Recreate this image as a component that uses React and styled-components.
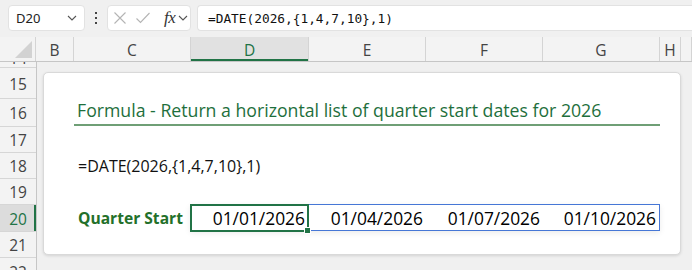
import React from "react";
import styled, { createGlobalStyle } from "styled-components";

const GlobalStyle = createGlobalStyle`
  body {
    margin: 0;
    background: #f0f0f0;
    font-family: "Open Sans", "Noto Sans", sans-serif;
    overflow: hidden;
  }
`;

const GREEN = "#217346";

const Page = styled.div`
  width: 692px;
  height: 270px;
  overflow: hidden;
  display: flex;
  flex-direction: column;
  background: #f0f0f0;
`;

/* ---------- formula bar ---------- */
const FormulaBar = styled.div`
  height: 37px;
  flex: none;
  display: flex;
  align-items: flex-start;
  padding: 5px 0 0 8px;
  box-sizing: border-box;
  background: #f0f0f0;
`;

const Box = styled.div`
  height: 26px;
  box-sizing: border-box;
  background: #fff;
  border: 1px solid #e2e2e2;
  border-radius: 4px;
  display: flex;
  align-items: center;
  width: ${(p) => p.$w || "auto"};
  flex: ${(p) => (p.$grow ? 1 : "none")};
  ${(p) => p.$grow && "border-right: none; border-radius: 4px 0 0 4px;"}
`;

const NameText = styled.span`
  font-family: "Noto Sans", sans-serif;
  font-size: 13px;
  color: #222;
  padding-left: 7px;
  flex: 1;
`;

const Dots = styled.div`
  width: 22px;
  height: 26px;
  display: flex;
  flex-direction: column;
  align-items: center;
  justify-content: center;
  gap: 3px;
  span {
    width: 2px;
    height: 2px;
    background: #444;
  }
`;

const FxIcons = styled.div`
  display: flex;
  align-items: center;
  padding-left: 5px;
  svg {
    display: block;
  }
`;

const Fx = styled.span`
  font-family: "Liberation Serif", serif;
  font-style: italic;
  font-size: 17px;
  color: #333;
  margin-left: 13px;
  letter-spacing: -0.5px;
`;

const FormulaText = styled.span`
  font-family: "DejaVu Sans Mono", monospace;
  font-size: 12.8px;
  color: #111;
  padding-left: 10px;
`;

const Gap = styled.div`
  width: ${(p) => p.$w}px;
  flex: none;
`;

const Chevron = ({ x = 0 }) => (
  <svg width="10" height="6" viewBox="0 0 10 6" style={{ marginLeft: x }}>
    <path d="M1 1 L5 5 L9 1" fill="none" stroke="#555" strokeWidth="1.1" />
  </svg>
);

/* ---------- sheet ---------- */
const Sheet = styled.div`
  flex: 1;
  min-height: 0;
  display: flex;
  flex-direction: column;
`;

const HeaderRow = styled.div`
  height: 24px;
  flex: none;
  display: grid;
  grid-template-columns: 36px 38px 117px 118px 117px 117px 117px 21px 1fr;
  border-bottom: 1px solid #c6c6c6;
  box-sizing: content-box;
  background: #f3f3f3;
`;

const Corner = styled.div`
  position: relative;
  border-right: 1px solid #d4d4d4;
  background: #f3f3f3;
  &::after {
    content: "";
    position: absolute;
    right: 3px;
    bottom: 3px;
    width: 0;
    height: 0;
    border-left: 17px solid transparent;
    border-bottom: 17px solid #d2d2d2;
  }
`;

const ColHead = styled.div`
  display: flex;
  align-items: center;
  justify-content: center;
  font-size: 15.5px;
  padding-top: 1px;
  color: ${(p) => (p.$active ? GREEN : "#444")};
  background: ${(p) => (p.$active ? "#e1e1e1" : "#f3f3f3")};
  border-right: 1px solid #d4d4d4;
  box-shadow: ${(p) => (p.$active ? `inset 0 -2px 0 ${GREEN}` : "none")};
`;

const Body = styled.div`
  flex: 1;
  min-height: 0;
  overflow: hidden;
  display: flex;
`;

const RowHeads = styled.div`
  width: 36px;
  flex: none;
  display: flex;
  flex-direction: column;
  border-right: 1px solid #c6c6c6;
  background: #f3f3f3;
`;

const RowHead = styled.div`
  height: ${(p) => p.$h}px;
  flex: none;
  box-sizing: border-box;
  overflow: hidden;
  display: flex;
  align-items: ${(p) => p.$align || "center"};
  justify-content: center;
  font-size: 15.5px;
  line-height: 17px;
  color: ${(p) => (p.$active ? GREEN : "#444")};
  background: ${(p) => (p.$active ? "#dcdcdc" : "#f3f3f3")};
  border-bottom: 1px solid #d6d6d6;
  box-shadow: ${(p) => (p.$active ? `inset -2px 0 0 ${GREEN}` : "none")};
  padding-top: ${(p) => (p.$pt === undefined ? 2 : p.$pt)}px;
`;

const Canvas = styled.div`
  flex: 1;
  padding: 10px 0 0 6px;
`;

const Card = styled.div`
  width: 638px;
  height: 183px;
  box-sizing: border-box;
  background: #fff;
  border: 1px solid #d9d9d9;
  border-radius: 5px;
  box-shadow: 0 1px 3px rgba(0, 0, 0, 0.12);
  display: grid;
  grid-template-columns: 30px 117px 118px 117px 117px 117px 1fr;
  grid-template-rows: 25px 28px 26px 26px 26px 27px 1fr;
`;

const Title = styled.div`
  grid-column: 2 / 7;
  grid-row: 2;
  display: flex;
  align-items: flex-end;
  padding: 0 0 2px 3px;
  border-bottom: 2px solid #6f9f76;
  font-size: 17.7px;
  color: #1e6f3c;
  white-space: nowrap;
`;

const Formula = styled.div`
  grid-column: 2 / 5;
  grid-row: 4;
  display: flex;
  align-items: center;
  padding: 1px 0 0 4px;
  font-size: 16px;
  color: #111;
  white-space: nowrap;
`;

const Label = styled.div`
  grid-column: 2;
  grid-row: 6;
  display: flex;
  align-items: center;
  padding: 1px 0 0 4px;
  font-size: 15.6px;
  font-weight: 700;
  color: #23702a;
  white-space: nowrap;
`;

const Spill = styled.div`
  grid-column: 3 / 7;
  grid-row: 6;
  margin-left: -1px;
  display: grid;
  grid-template-columns: 118px 117px 117px 1fr;
  border: 1px solid #4677d6;
  box-shadow: 0 2px 6px rgba(0, 0, 0, 0.08);
`;

const DateCell = styled.div`
  position: relative;
  display: flex;
  align-items: center;
  justify-content: flex-end;
  padding-right: 3px;
  font-size: 17.4px;
  color: #000;
  ${(p) =>
    p.$active &&
    `
    margin: -1px 0 -1px -1px;
    border: 2px solid ${GREEN};
    padding-right: 2px;
    &::after {
      content: "";
      position: absolute;
      right: -4px;
      bottom: -4px;
      width: 5px;
      height: 5px;
      background: ${GREEN};
      border: 1px solid #fff;
    }
  `}
`;

const cols = ["B", "C", "D", "E", "F", "G", "H"];
const rows = [
  { n: 14, h: 6, align: "flex-end", pt: 0 },
  { n: 15, h: 31 },
  { n: 16, h: 28 },
  { n: 17, h: 26 },
  { n: 18, h: 26 },
  { n: 19, h: 26 },
  { n: 20, h: 27, active: true },
  { n: 21, h: 26 },
  { n: 22, h: 20, align: "flex-start", pt: 6 },
];
const dates = ["01/01/2026", "01/04/2026", "01/07/2026", "01/10/2026"];

export default function App() {
  return (
    <Page>
      <GlobalStyle />
      <FormulaBar>
        <Box $w="77px">
          <NameText>D20</NameText>
          <Chevron />
          <Gap $w={7} />
        </Box>
        <Dots>
          <span />
          <span />
          <span />
        </Dots>
        <Box $w="84px">
          <FxIcons>
            <svg width="14" height="14" viewBox="0 0 14 14">
              <path d="M1.5 1.5 L12.5 12.5 M12.5 1.5 L1.5 12.5" stroke="#b4b4b4" strokeWidth="1.1" fill="none" />
            </svg>
            <svg width="16" height="14" viewBox="0 0 16 14" style={{ marginLeft: 8 }}>
              <path d="M1.5 7.5 L5.5 11.5 L14.5 2" stroke="#b4b4b4" strokeWidth="1.1" fill="none" />
            </svg>
            <Fx>fx</Fx>
            <Chevron x={3} />
          </FxIcons>
        </Box>
        <Gap $w={6} />
        <Box $grow>
          <FormulaText>=DATE(2026,&#123;1,4,7,10&#125;,1)</FormulaText>
        </Box>
      </FormulaBar>
      <Sheet>
        <HeaderRow>
          <Corner />
          {cols.map((c) => (
            <ColHead key={c} $active={c === "D"}>
              {c}
            </ColHead>
          ))}
          <ColHead />
        </HeaderRow>
        <Body>
          <RowHeads>
            {rows.map((r) => (
              <RowHead key={r.n} $h={r.h} $align={r.align} $pt={r.pt} $active={r.active}>
                {r.n}
              </RowHead>
            ))}
          </RowHeads>
          <Canvas>
            <Card>
              <Title>Formula - Return a horizontal list of quarter start dates for 2026</Title>
              <Formula>=DATE(2026,&#123;1,4,7,10&#125;,1)</Formula>
              <Label>Quarter Start</Label>
              <Spill>
                {dates.map((d, i) => (
                  <DateCell key={d} $active={i === 0}>
                    {d}
                  </DateCell>
                ))}
              </Spill>
            </Card>
          </Canvas>
        </Body>
      </Sheet>
    </Page>
  );
}
